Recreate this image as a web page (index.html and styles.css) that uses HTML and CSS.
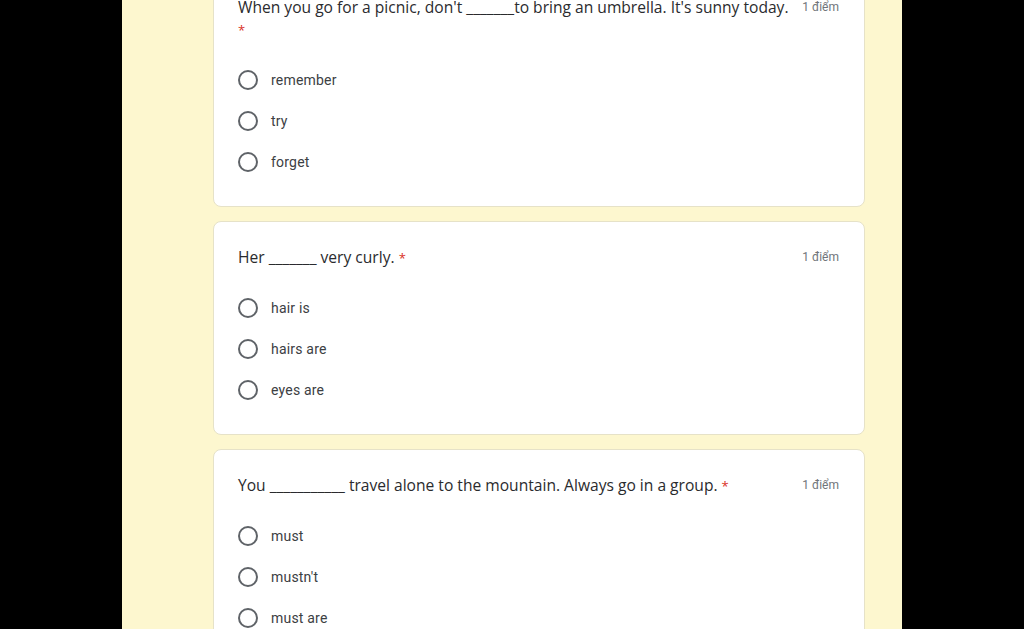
FILE: index.html
```html
<!DOCTYPE html>
<html lang="vi">
<head>
<meta charset="utf-8">
<link rel="stylesheet" href="styles.css">
</head>
<body>
<div class="page">
  <div class="column">
    <div class="stack">
      <section class="card card-first">
        <div class="q-head">
          <div class="q-text"><span class="nowrap">When you go for a picnic, don't _______to bring an umbrella. It's sunny today.</span> <span class="req req-wrap">*</span></div>
          <div class="points">1 điểm</div>
        </div>
        <div class="options">
          <label class="opt"><span class="radio"></span><span class="opt-text">remember</span></label>
          <label class="opt"><span class="radio"></span><span class="opt-text">try</span></label>
          <label class="opt"><span class="radio"></span><span class="opt-text">forget</span></label>
        </div>
      </section>
      <section class="card">
        <div class="q-head">
          <div class="q-text">Her _______ very curly. <span class="req">*</span></div>
          <div class="points">1 điểm</div>
        </div>
        <div class="options">
          <label class="opt"><span class="radio"></span><span class="opt-text">hair is</span></label>
          <label class="opt"><span class="radio"></span><span class="opt-text">hairs are</span></label>
          <label class="opt"><span class="radio"></span><span class="opt-text">eyes are</span></label>
        </div>
      </section>
      <section class="card">
        <div class="q-head">
          <div class="q-text">You ___________ travel alone to the mountain. Always go in a group. <span class="req">*</span></div>
          <div class="points">1 điểm</div>
        </div>
        <div class="options">
          <label class="opt"><span class="radio"></span><span class="opt-text">must</span></label>
          <label class="opt"><span class="radio"></span><span class="opt-text">mustn't</span></label>
          <label class="opt"><span class="radio"></span><span class="opt-text">must are</span></label>
        </div>
      </section>
    </div>
  </div>
</div>
</body>
</html>
```
FILE: styles.css
```css
html, body {
  margin: 0;
  padding: 0;
  background: #000;
  height: 100%;
  overflow: hidden;
}
.page {
  display: flex;
  justify-content: center;
  height: 100%;
}
.column {
  width: 780px;
  background: #fdf7cf;
  padding: 0 37px 0 91px;
  box-sizing: border-box;
}
.stack {
  display: flex;
  flex-direction: column;
  gap: 14px;
  margin-top: -29px;
}
.card {
  background: #fff;
  border: 1px solid #e6e2c8;
  border-radius: 8px;
  padding: 23px 24px 33px 24px;
  box-sizing: border-box;
}
.card-first {
  height: 236px;
}
.q-head {
  display: flex;
  align-items: flex-start;
  gap: 8px;
}
.q-text {
  flex: 1;
  min-width: 0;
  font-family: "Open Sans", sans-serif;
  font-size: 15.6px;
  line-height: 24px;
  color: #2a2b2e;
}
.nowrap {
  white-space: nowrap;
}
.req {
  color: #d93025;
  font-size: 13px;
}
.req-wrap {
  display: block;
  line-height: 23px;
}
.points {
  font-family: Roboto, sans-serif;
  font-size: 12px;
  color: #70757a;
  line-height: 24px;
  padding-right: 1px;
}
.options {
  display: flex;
  flex-direction: column;
  gap: 19px;
  margin-top: 27px;
}
.opt {
  display: flex;
  align-items: center;
  height: 22px;
}
.radio {
  width: 16px;
  height: 16px;
  border: 2px solid #5f6368;
  border-radius: 50%;
  flex: none;
}
.opt-text {
  margin-left: 13px;
  font-family: Roboto, sans-serif;
  font-size: 14px;
  color: #3c4043;
  letter-spacing: 0.2px;
}
```
